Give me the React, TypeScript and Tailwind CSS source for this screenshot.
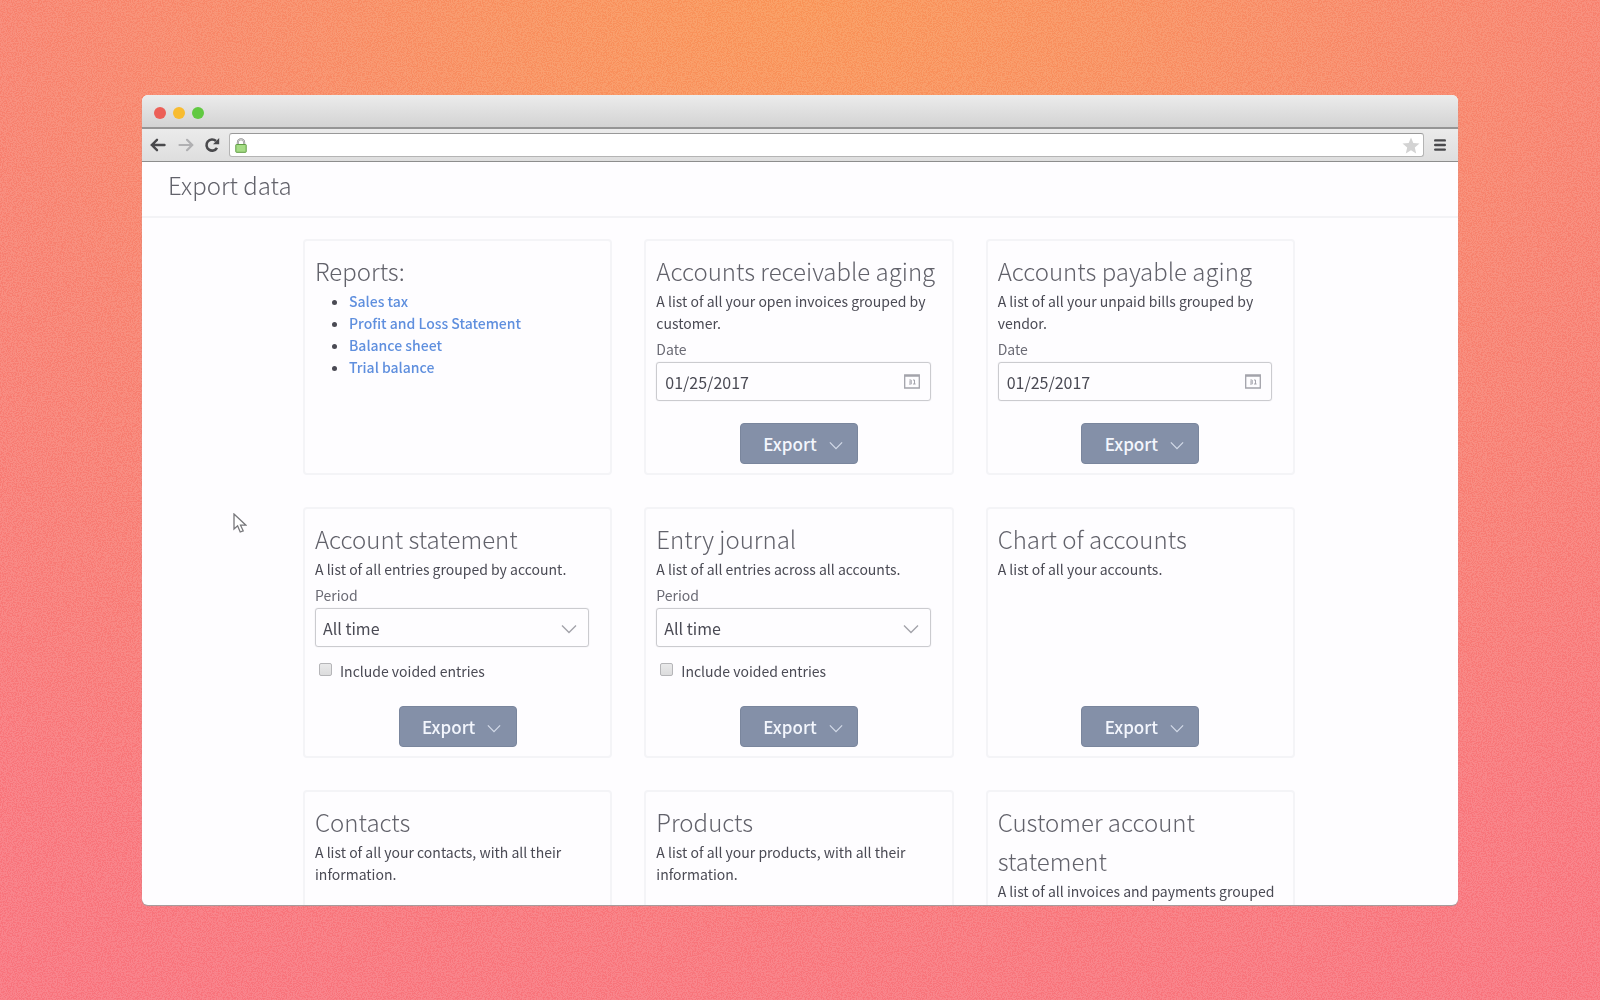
import type { ReactNode } from "react";

const reports = ["Sales tax", "Profit and Loss Statement", "Balance sheet", "Trial balance"];

function Chevron({ className }: { className: string }) {
  return (
    <svg viewBox="0 0 16 10" className={className} fill="none" stroke="currentColor" strokeWidth="1.4">
      <path d="M1 1.5 8 8.5 15 1.5" />
    </svg>
  );
}

function ExportButton() {
  return (
    <button
      type="button"
      className="mt-auto flex h-[41px] w-[118px] items-center justify-center gap-3 self-center rounded border border-[#7a869d] bg-[#8490a8] pl-2 text-[17px] font-medium text-[#f3f6fd]"
    >
      Export
      <Chevron className="mt-1 h-[9px] w-[14px] text-[#d3dae8]" />
    </button>
  );
}

type CardProps = { title: string; text?: string; children?: ReactNode };

function Card({ title, text, children }: CardProps) {
  return (
    <section className="flex flex-col rounded border-2 border-[#f4f4f7] px-[10px] pt-[10px] pb-[9px]">
      <h2 className="text-2xl leading-[39px] font-light text-[#62626b]">{title}</h2>
      {text && <p className="text-sm leading-[22px] text-[#4a4a54]">{text}</p>}
      {children}
    </section>
  );
}

function DateField({ id }: { id: string }) {
  return (
    <div className="mt-1 mr-[11px] mb-[22px]">
      <label htmlFor={id} className="block pb-[2px] text-sm leading-[22px] text-[#6a6a74]">
        Date
      </label>
      <div className="flex h-[39px] items-center rounded-[3px] border border-[#cbcbcf] px-2 shadow-[0_0_1px_#cbcbcf]">
        <input
          id={id}
          defaultValue="01/25/2017"
          className="min-w-0 flex-1 bg-transparent text-base text-[#4a4a54] outline-none"
        />
        <svg viewBox="0 0 16 15" className="mr-[2px] h-[15px] w-4" fill="none" stroke="#a3a3ab">
          <path d="M.7 1h14.6v13H.7zM.7 2.2h14.6" strokeWidth="1.3" />
          <path d="M5.3 6h1.900v4M5 8h2.200M5 10h2.400M9 6h1.500v4M9 10h2.600" strokeWidth="1" />
        </svg>
      </div>
    </div>
  );
}

function PeriodFields({ id }: { id: string }) {
  return (
    <div className="mt-1 mr-[11px] mb-6">
      <label htmlFor={id} className="block pb-[2px] text-sm leading-[22px] text-[#6a6a74]">
        Period
      </label>
      <div className="relative">
        <select
          id={id}
          className="block h-[39px] w-full appearance-none rounded-[3px] border border-[#cbcbcf] bg-transparent px-[7px] text-base text-[#4a4a54] shadow-[0_0_1px_#cbcbcf]"
        >
          <option>All time</option>
        </select>
        <Chevron className="pointer-events-none absolute top-4 right-3 h-[10px] w-4 text-[#a3a3aa]" />
      </div>
      <label className="mt-[13px] flex items-start gap-2 pl-1 text-sm leading-[22px] text-[#4a4a54]">
        <input
          type="checkbox"
          className="mt-[3px] size-[13px] appearance-none rounded-[2px] border border-[#b5b5b8] bg-linear-to-b from-[#e9e9ea] to-[#dcdcdd]"
        />
        Include voided entries
      </label>
    </div>
  );
}

function BrowserBar() {
  return (
    <header>
      <div className="flex h-[34px] items-center gap-[7px] border-b-2 border-[#959595] bg-linear-to-b from-[#ececec] to-[#d3d3d3] pt-[3px] pl-3">
        <span className="size-3 rounded-full bg-[#ec5f57]" />
        <span className="size-3 rounded-full bg-[#f8bc30]" />
        <span className="size-3 rounded-full bg-[#61c941]" />
      </div>
      <div className="flex h-[33px] items-center border-b border-[#8d8d8d] bg-linear-to-b from-[#ebebeb] to-[#dedede] pl-2">
        <button type="button" aria-label="Back" className="mr-3 text-[#49494c]">
          <svg viewBox="0 0 16 14" className="h-[14px] w-4" fill="none" stroke="currentColor" strokeWidth="2.4" strokeLinecap="round">
            <path d="M14.500 7H2M7 1.800 1.800 7 7 12.200" />
          </svg>
        </button>
        <button type="button" aria-label="Forward" className="mr-[10px] text-[#b0b0b2]">
          <svg viewBox="0 0 16 14" className="h-[14px] w-4" fill="none" stroke="currentColor" strokeWidth="2.200" strokeLinecap="round">
            <path d="M1.500 7H14M9 1.800 14.200 7 9 12.200" />
          </svg>
        </button>
        <button type="button" aria-label="Reload" className="mr-[9px] text-[#49494c]">
          <svg viewBox="0 0 16 16" className="size-4" fill="none" stroke="currentColor" strokeWidth="2.600">
            <path d="M13 10.800A5.600 5.600 0 1 1 12 4" />
            <path d="M15.200 1v6.200H9z" fill="currentColor" stroke="none" />
          </svg>
        </button>
        <div className="flex h-6 flex-1 items-center rounded-[3px] border border-[#b4b4b4] border-t-[#999] bg-white pr-[3px] pl-[5px]">
          <svg viewBox="0 0 12 15" className="h-[15px] w-3" fill="none">
            <path d="M2.800 7V4.500a3.200 3.200 0 0 1 6.400 0V7" stroke="#8f8f8f" strokeWidth="2" />
            <path d="M2.800 7V4.500a3.200 3.200 0 0 1 6.400 0V7" stroke="#e4e4e4" strokeWidth=".7" />
            <rect x=".8" y="6.500" width="10.400" height="7.800" rx=".6" fill="#a5dc85" stroke="#5f9d43" />
          </svg>
          <input aria-label="Address" className="min-w-0 flex-1 bg-transparent px-2 text-sm outline-none" />
          <svg viewBox="0 0 18 17" className="h-[17px] w-[18px]" fill="#d3d3d3">
            <path d="M9 .5l2.300 5.500 6.200.5-4.700 4 1.400 6L9 13.300l-5.200 3.200 1.400-6L.5 6.500 6.700 6z" />
          </svg>
        </div>
        <button type="button" aria-label="Menu" className="mr-3 ml-[10px] text-[#49494c]">
          <svg viewBox="0 0 12 12" className="size-3" stroke="currentColor" strokeWidth="2.400" strokeLinecap="round">
            <path d="M1.200 1.400h9.600M1.200 6h9.600M1.200 10.600h9.600" />
          </svg>
        </button>
      </div>
    </header>
  );
}

export default function App() {
  return (
    <div className="relative flex h-screen flex-col bg-[radial-gradient(ellipse_100%_110%_at_50%_0%,#fa9c60_0%,#f99768_20%,#f88a78_50%,#f97f84_85%,#f97d86_100%)] px-[142px] py-[95px] font-['Noto_Sans_CJK_SC','Source_Sans_Pro',sans-serif]">
      <svg className="pointer-events-none absolute inset-0 size-full opacity-15 mix-blend-soft-light" aria-hidden="true">
        <filter id="grain">
          <feTurbulence type="fractalNoise" baseFrequency="0.8" numOctaves="2" />
          <feColorMatrix values="5 0 0 0 -2.2  5 0 0 0 -2.2  5 0 0 0 -2.2  0 0 0 0 1" />
        </filter>
        <rect width="100%" height="100%" filter="url(#grain)" />
      </svg>

      <div className="relative flex min-h-0 flex-1 flex-col overflow-hidden rounded-md bg-[#fefdff] shadow-[0_1px_1px_#9f9f9f]">
        <BrowserBar />

        <div className="border-b-2 border-[#f3f3f6] px-[26px] pt-[3px] pb-[11px]">
          <h1 className="text-2xl leading-10 font-light text-[#62626b]">Export data</h1>
        </div>

        <main className="min-h-0 flex-1 overflow-hidden pt-[21px] pr-[2px]">
          <div className="mx-auto grid max-w-[992px] grid-cols-3 gap-8">
            <Card title="Reports:">
              <ul className="list-disc pl-[34px] text-sm leading-[22px] text-[#4a4a54]">
                {reports.map((report) => (
                  <li key={report}>
                    <a href="#" className="font-medium text-[#5f8fde]">
                      {report}
                    </a>
                  </li>
                ))}
              </ul>
            </Card>
            <Card title="Accounts receivable aging" text="A list of all your open invoices grouped by customer.">
              <DateField id="receivable-date" />
              <ExportButton />
            </Card>
            <Card title="Accounts payable aging" text="A list of all your unpaid bills grouped by vendor.">
              <DateField id="payable-date" />
              <ExportButton />
            </Card>

            <Card title="Account statement" text="A list of all entries grouped by account.">
              <PeriodFields id="statement-period" />
              <ExportButton />
            </Card>
            <Card title="Entry journal" text="A list of all entries across all accounts.">
              <PeriodFields id="journal-period" />
              <ExportButton />
            </Card>
            <Card title="Chart of accounts" text="A list of all your accounts.">
              <ExportButton />
            </Card>

            <Card title="Contacts" text="A list of all your contacts, with all their information." />
            <Card title="Products" text="A list of all your products, with all their information." />
            <Card title="Customer account statement" text="A list of all invoices and payments grouped" />
          </div>
        </main>

        <svg viewBox="0 0 14 20" className="pointer-events-none absolute top-[418px] left-[91px] h-5 w-[14px]" aria-hidden="true">
          <path d="M1 1v15l3.600-3.200L7.200 19l3-1.200-2.700-5.600H13z" fill="#fff" stroke="#77777b" strokeWidth="1.300" />
        </svg>
      </div>
    </div>
  );
}
